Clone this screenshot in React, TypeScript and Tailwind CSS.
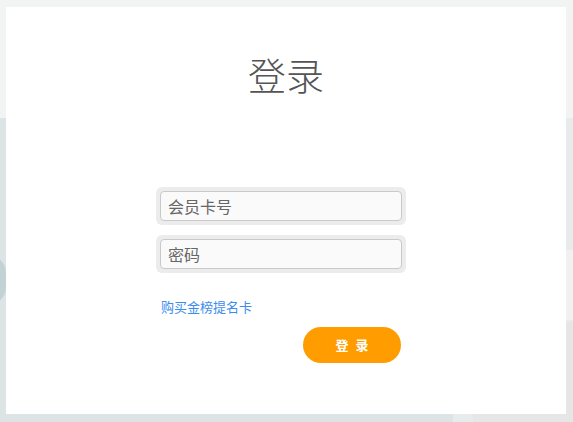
export default function App() {
  return (
    <div
      className="relative h-[422px] w-[573px] overflow-hidden bg-[#dde4e5] pt-[7px] pl-[6px]"
      style={{ fontFamily: '"Noto Sans CJK SC", "Noto Sans", sans-serif' }}
    >
      {/* background decoration */}
      <div className="absolute left-0 top-0 h-[118px] w-full bg-[#f2f4f4]" />
      <div className="absolute right-0 top-[118px] h-[304px] w-[120px] bg-[#e8ebeb]" />
      <div className="absolute right-0 top-[250px] h-[70px] w-[120px] bg-[#f1f1f1]" />
      <div className="absolute bottom-0 right-0 h-[100px] w-[100px] bg-[#e6e6e6]" />
      <div className="absolute left-[-30px] top-[255px] h-[50px] w-[36px] rounded-full bg-[#c3d2d5]" />

      <div className="relative h-[407px] w-[560px] bg-white">
        <h1 className="pt-[43px] text-center text-[38px] font-light leading-[48px] text-[#555]">
          登录
        </h1>

        <form className="mt-[89px] ml-[150px] flex w-[250px] flex-col gap-[10px]">
          <div className="rounded-[6px] bg-[#ececec] p-[4px]">
            <input
              placeholder="会员卡号"
              className="h-[30px] w-full rounded-[4px] border border-[#c9c9c9] bg-[#fafafa] px-[7px] text-[16px] text-[#555] outline-none placeholder:text-[#666]"
            />
          </div>
          <div className="rounded-[6px] bg-[#ececec] p-[4px]">
            <input
              type="password"
              placeholder="密码"
              className="h-[30px] w-full rounded-[4px] border border-[#c9c9c9] bg-[#fafafa] px-[7px] text-[16px] text-[#555] outline-none placeholder:text-[#666]"
            />
          </div>

          <a href="#" className="mt-[14px] ml-[5px] text-[13px] leading-[20px] text-[#3d8ded]">
            购买金榜提名卡
          </a>

          <div className="flex justify-end pr-[5px]">
            <button
              type="button"
              className="h-[36px] w-[98px] rounded-full bg-[#ff9c00] pl-[2px] text-[13px] font-bold tracking-[2px] text-white"
            >
              登 录
            </button>
          </div>
        </form>
      </div>
    </div>
  );
}
